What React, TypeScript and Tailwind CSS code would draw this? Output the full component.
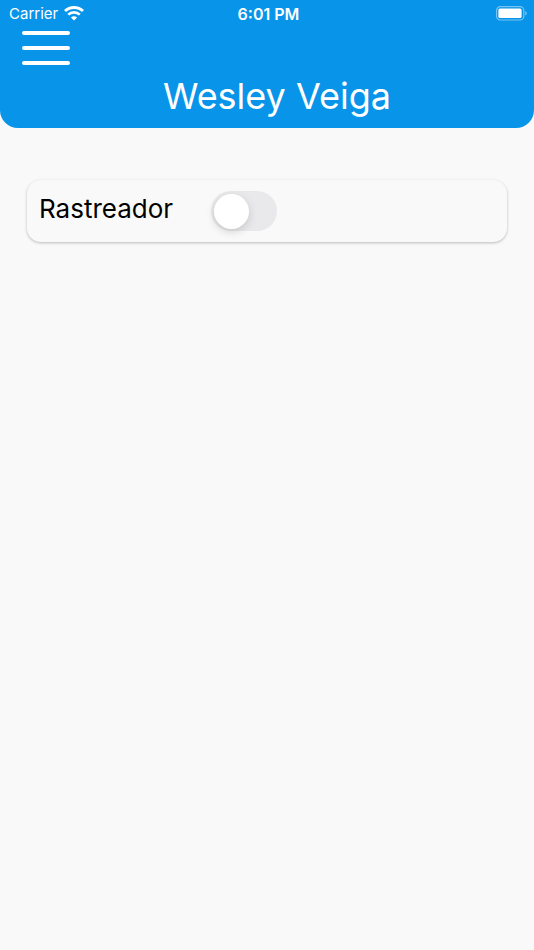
import { useState } from "react";

function WifiIcon() {
  return (
    <svg viewBox="0 0 20 15" fill="none" aria-hidden className="h-[15px] w-5">
      <path
        d="M1 5C6 .4 14 .4 19 5"
        stroke="white"
        strokeWidth="2.9"
      />
      <path
        d="M4.2 8.6c3.2-3 8.4-3 11.6 0"
        stroke="white"
        strokeWidth="2.6"
      />
      <path d="M6.9 11.4c1.7-1.6 4.5-1.6 6.2 0L10 14.6l-3.1-3.2Z" fill="white" />
    </svg>
  );
}

function BatteryIcon() {
  return (
    <svg viewBox="0 0 32 15" fill="none" aria-hidden className="h-[15px] w-8">
      <rect
        x="0.6"
        y="0.6"
        width="27.2"
        height="13.4"
        rx="3.8"
        stroke="white"
        strokeOpacity="0.45"
        strokeWidth="1.2"
      />
      <rect x="2.4" y="2.5" width="23.2" height="9.6" rx="1.6" fill="white" />
      <path
        d="M29.3 5c1.9.8 1.9 3.8 0 4.6V5Z"
        fill="white"
        fillOpacity="0.5"
      />
    </svg>
  );
}

function StatusBar() {
  return (
    <div className="grid h-[27px] grid-cols-3 items-center pl-[9px] pr-[6px] leading-5 text-white">
      <div className="flex items-center gap-1.5">
        <span className="text-[15px]">Carrier</span>
        <WifiIcon />
      </div>
      <span className="text-center text-[16px] font-semibold">6:01 PM</span>
      <div className="flex justify-end">
        <BatteryIcon />
      </div>
    </div>
  );
}

function Header({ name }: Readonly<{ name: string }>) {
  return (
    <header className="rounded-b-[18px] bg-[#0894e8] pb-[9px]">
      <StatusBar />
      <div className="px-[22px] pt-1">
        <button
          type="button"
          aria-label="Abrir menu"
          className="flex w-12 flex-col gap-[11px]"
        >
          <span className="h-1 w-full rounded-full bg-white" />
          <span className="h-1 w-full rounded-full bg-white" />
          <span className="h-1 w-full rounded-full bg-white" />
        </button>
      </div>
      <h1 className="pl-5 pt-2 text-center text-[36px] leading-[46px] text-white">
        {name}
      </h1>
    </header>
  );
}

function TrackerCard() {
  const [enabled, setEnabled] = useState(false);

  return (
    <section className="flex items-center gap-[38px] rounded-[14px] bg-[#f9f9f9] px-3 py-[11px] shadow-[0_1px_3px_rgba(0,0,0,0.25)]">
      <label
        htmlFor="tracker"
        className="pb-1 text-[26px] leading-9 text-black"
      >
        Rastreador
      </label>
      <input
        id="tracker"
        type="checkbox"
        role="switch"
        checked={enabled}
        onChange={(e) => setEnabled(e.target.checked)}
        className="flex h-10 w-[66px] shrink-0 appearance-none items-center rounded-full bg-[#e9e9eb] px-[3px] before:size-[35px] before:rounded-full before:bg-white before:shadow-[0_3px_8px_rgba(0,0,0,0.15)] before:content-[''] checked:justify-end checked:bg-[#34c759]"
      />
    </section>
  );
}

export default function App() {
  return (
    <div className="min-h-screen bg-[#f9f9f9] font-['Inter',sans-serif]">
      <Header name="Wesley Veiga" />
      <main className="px-[27px] pt-[52px]">
        <TrackerCard />
      </main>
    </div>
  );
}
